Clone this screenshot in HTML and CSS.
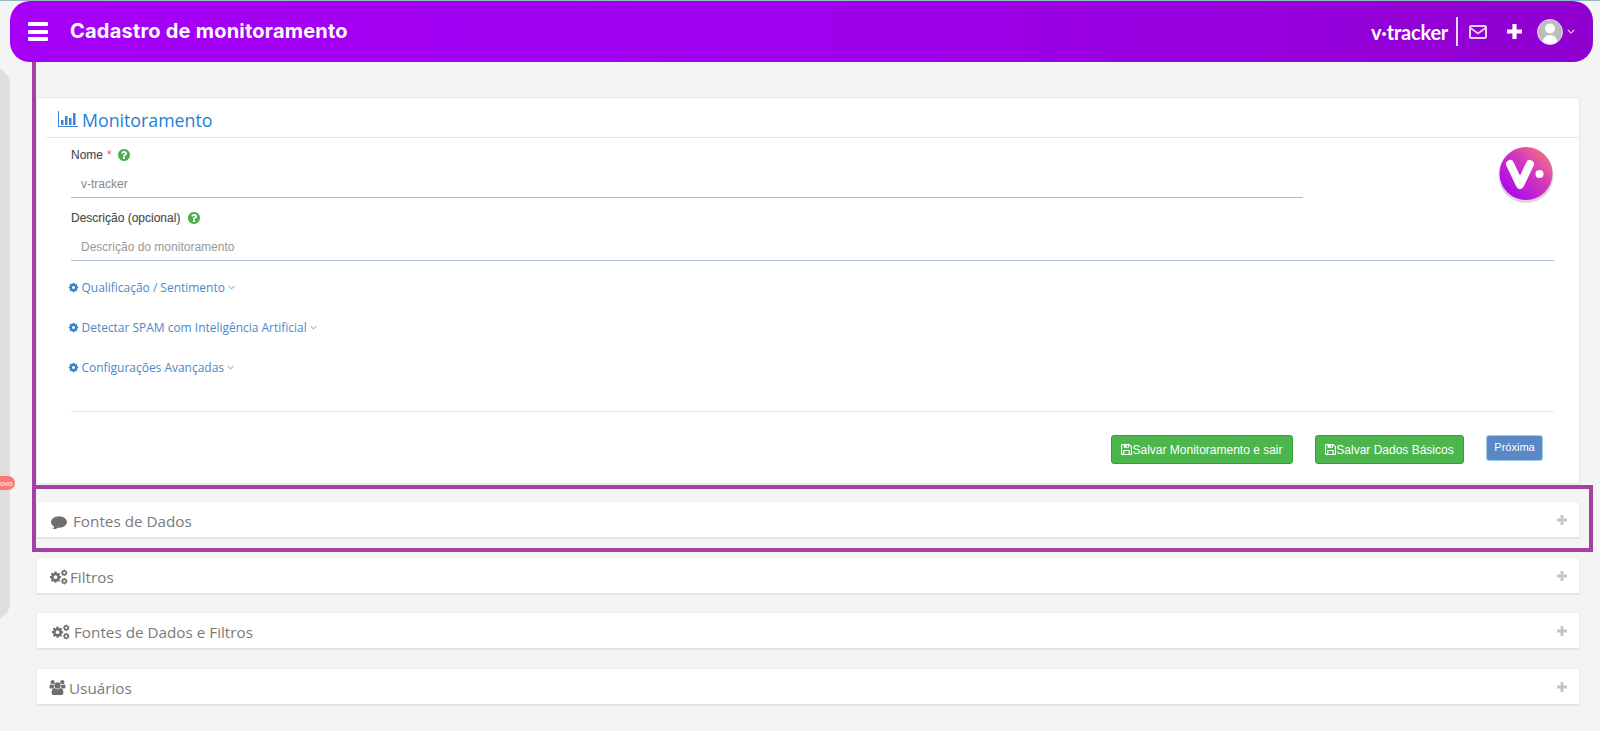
FILE: index.html
```html
<!DOCTYPE html>
<html lang="pt-BR">
<head>
<meta charset="utf-8">
<title>Cadastro de monitoramento</title>
<link rel="stylesheet" href="styles.css">
</head>
<body>
<svg class="defs" width="0" height="0" aria-hidden="true">
  <symbol id="cog" viewBox="0 0 1792 1792"><path d="M1152 896q0-106-75-181t-181-75-181 75-75 181 75 181 181 75 181-75 75-181zm512-109v222q0 12-8 23t-20 13l-185 28q-19 54-39 91 35 50 107 138 10 12 10 25t-9 23q-27 37-99 108t-94 71q-12 0-26-9l-138-108q-44 23-91 38-16 136-29 186-7 28-36 28h-222q-14 0-24.500-8.500t-11.500-21.500l-28-184q-49-16-90-37l-141 107q-10 9-25 9-14 0-25-11-126-114-165-168-7-10-7-23 0-12 8-23 15-21 51-66.500t54-70.500q-27-50-41-99l-183-27q-13-2-21-12.500t-8-23.500v-222q0-12 8-23t19-13l186-28q14-46 39-92-40-57-107-138-10-12-10-24 0-10 9-23 26-36 98.500-107.500t94.500-71.500q13 0 26 10l138 107q44-23 91-38 16-136 29-186 7-28 36-28h222q14 0 24.500 8.500t11.500 21.500l28 184q49 16 90 37l142-107q9-9 24-9 13 0 25 10 129 119 165 170 7 8 7 22 0 12-8 23-15 21-51 66.500t-54 70.500q26 50 41 98l183 28q13 2 21 12.500t8 23.500z"/></symbol>
  <symbol id="help" viewBox="128 128 1536 1536"><path d="M1024 1376v-192q0-14-9-23t-23-9h-192q-14 0-23 9t-9 23v192q0 14 9 23t23 9h192q14 0 23-9t9-23zm256-672q0-88-55.500-163t-138.500-116-170-41q-243 0-371 213-15 24 8 42l132 100q7 6 19 6 16 0 25-12 53-68 86-92 34-24 86-24 48 0 85.500 26t37.500 59q0 38-20 61t-68 45q-63 28-115.500 86.500t-52.500 125.500v36q0 14 9 23t23 9h192q14 0 23-9t9-23q0-19 21.500-49.500t54.500-49.500q32-18 49-28.500t46-35 44.500-48 28-60.500 12.500-81zm384 192q0 209-103 385.500t-279.500 279.500-385.500 103-385.500-103-279.500-279.500-103-385.500 103-385.500 279.500-279.500 385.500-103 385.500 103 279.500 279.500 103 385.500z"/></symbol>
  <symbol id="cogs" viewBox="0 0 24 20"><use href="#cog" x="0" y="2" width="16.500" height="16.500"/><use href="#cog" x="14.500" y="0" width="9.500" height="9.500"/><use href="#cog" x="14.500" y="10.500" width="9.500" height="9.500"/></symbol>
  <symbol id="chev" viewBox="0 0 10 6"><path d="M1 1l4 4 4-4" fill="none" stroke="currentColor" stroke-width="1.300"/></symbol>
  <symbol id="plus" viewBox="0 0 10 10"><path d="M3.600 0h2.800v3.600H10v2.800H6.400V10H3.600V6.400H0V3.600h3.600z"/></symbol>
  <symbol id="floppy" viewBox="0 0 12 12"><path fill-rule="evenodd" d="M0 1a1 1 0 0 1 1-1h8.200L12 2.800V11a1 1 0 0 1-1 1H1a1 1 0 0 1-1-1zM1.200 1.200v9.600h1.300V6.500h7v4.300h1.300V3.300L8.800 1.200v3H2.800v-3zM3.700 7.700v3.100h4.600V7.700zM6.200 1.400v1.800h1.300V1.400z"/></symbol>
</svg>

<aside class="side-rail"><span class="rail-badge">ovo</span></aside>

<div class="page">
  <header class="topbar">
    <div class="topbar-left">
      <span class="burger"><i></i><i></i><i></i></span>
      <h1 class="page-title">Cadastro de monitoramento</h1>
    </div>
    <div class="topbar-right">
      <span class="brand">v·tracker</span>
      <span class="brand-sep"></span>
      <svg class="mail" viewBox="0 0 18 14"><rect x="1" y="1" width="16" height="12" rx="1.500" fill="none" stroke="currentColor" stroke-width="2"/><path d="M1.500 3l7.500 5.500L16.500 3" fill="none" stroke="currentColor" stroke-width="1.700"/></svg>
      <svg class="top-plus"><use href="#plus"/></svg>
      <span class="avatar"><svg viewBox="0 0 24 24"><circle cx="12" cy="8.500" r="5"/><path d="M4.500 24c0-6 3-9 7.500-9s7.500 3 7.500 9z"/></svg></span>
      <svg class="top-chev"><use href="#chev"/></svg>
    </div>
  </header>

  <main class="content">
    <section class="card">
      <div class="card-head">
        <h2 class="card-title">
          <svg class="chart" viewBox="0 0 20 16"><path d="M0 0h1v15h19v1H0z"/><rect x="3" y="9" width="2.500" height="5"/><rect x="7" y="5" width="2.500" height="9"/><rect x="11" y="7" width="2.500" height="7"/><rect x="15" y="2" width="2.500" height="12"/></svg>
          Monitoramento
        </h2>
      </div>
      <form class="form">
        <div class="name-row">
          <div class="field name-field">
            <label class="label">Nome <span class="req">*</span> <svg class="help"><use href="#help"/></svg></label>
            <div class="input val">v-tracker</div>
          </div>
          <svg class="logo" viewBox="0 0 56 58">
            <defs><linearGradient id="lg" x1="0" y1="1" x2="1" y2="0"><stop offset=".2" stop-color="#b30de6"/><stop offset=".6" stop-color="#d63bb8"/><stop offset="1" stop-color="#ff8573"/></linearGradient></defs>
            <circle cx="28" cy="29.500" r="27.500" fill="#d8d8d8"/>
            <circle cx="28" cy="27.500" r="26.500" fill="url(#lg)"/>
            <path d="M12 18l10 21 10-21" fill="none" stroke="#fff" stroke-width="8" stroke-linecap="round" stroke-linejoin="round"/>
            <circle cx="41.500" cy="28" r="4" fill="#fff"/>
          </svg>
        </div>
        <div class="field desc-field">
          <label class="label">Descrição (opcional) <svg class="help"><use href="#help"/></svg></label>
          <div class="input ph">Descrição do monitoramento</div>
        </div>
        <ul class="toggles">
          <li class="toggle"><svg class="tcog"><use href="#cog"/></svg>Qualificação / Sentimento<svg class="tchev"><use href="#chev"/></svg></li>
          <li class="toggle"><svg class="tcog"><use href="#cog"/></svg>Detectar SPAM com Inteligência Artificial<svg class="tchev"><use href="#chev"/></svg></li>
          <li class="toggle"><svg class="tcog"><use href="#cog"/></svg>Configurações Avançadas<svg class="tchev"><use href="#chev"/></svg></li>
        </ul>
        <div class="actions">
          <button type="button" class="btn green"><svg class="fl"><use href="#floppy"/></svg>Salvar Monitoramento e sair</button>
          <button type="button" class="btn green second"><svg class="fl"><use href="#floppy"/></svg>Salvar Dados Básicos</button>
          <button type="button" class="btn blue">Próxima</button>
        </div>
      </form>
    </section>

    <section class="panel">
      <span class="panel-title"><svg class="pi comment" viewBox="0 0 1792 1536"><path d="M1792 768q0 174-120 321.500t-326 233-450 85.500q-70 0-145-8-198 175-460 242-49 14-114 22-17 2-30.500-9t-17.500-29v-1q-3-4-.5-12t2-10 4.500-9.500l6-9 7-8.500 8-9q7-8 31-34.500t34.500-38 31-39.500 32.500-51 27-59 26-76q-157-89-247.500-220t-90.500-281q0-130 71-248.500t191-204.500 286-136.500 348-50.500q244 0 450 85.500t326 233 120 321.500z"/></svg>Fontes de Dados</span>
      <svg class="panel-plus"><use href="#plus"/></svg>
    </section>
    <section class="panel">
      <span class="panel-title"><svg class="pi cogs"><use href="#cogs"/></svg>Filtros</span>
      <svg class="panel-plus"><use href="#plus"/></svg>
    </section>
    <section class="panel">
      <span class="panel-title t-wide"><svg class="pi cogs"><use href="#cogs"/></svg>Fontes de Dados e Filtros</span>
      <svg class="panel-plus"><use href="#plus"/></svg>
    </section>
    <section class="panel">
      <span class="panel-title"><svg class="pi users" viewBox="0 0 1920 1792"><path d="M593 896q-162 5-265 128h-134q-82 0-138-40.500t-56-118.500q0-353 124-353 6 0 43.500 21t97.500 42.500 119 21.500q67 0 133-23-5 37-5 66 0 139 81 256zm1071 637q0 120-73 189.500t-194 69.500h-874q-121 0-194-69.500t-73-189.500q0-53 3.500-103.500t14-109 26.500-108.500 43-97.500 62-81 85.500-53.500 111.500-20q10 0 43 21.500t73 48 107 48 135 21.500 135-21.500 107-48 73-48 43-21.500q61 0 111.500 20t85.500 53.500 62 81 43 97.500 26.500 108.500 14 109 3.500 103.500zm-1024-1277q0 106-75 181t-181 75-181-75-75-181 75-181 181-75 181 75 75 181zm704 384q0 159-112.500 271.500t-271.500 112.500-271.500-112.500-112.500-271.500 112.500-271.500 271.500-112.500 271.500 112.500 112.500 271.500zm576 225q0 78-56 118.500t-138 40.500h-134q-103-123-265-128 81-117 81-256 0-29-5-66 66 23 133 23 59 0 119-21.500t97.500-42.500 43.500-21q124 0 124 353zm-128-609q0 106-75 181t-181 75-181-75-75-181 75-181 181-75 181 75 75 181z"/></svg>Usuários</span>
      <svg class="panel-plus"><use href="#plus"/></svg>
    </section>
  </main>
</div>

<div class="mark-line"></div>
<div class="mark-box"></div>
</body>
</html>
```

FILE: styles.css
```css
* { box-sizing: border-box; }
html, body { height: 100%; }
body {
  margin: 0;
  background: #f4f4f4;
  font-family: "Open Sans", sans-serif;
  overflow: hidden;
}
.defs { position: absolute; }
svg { display: block; flex: none; }

.page { border-top: 1px solid #8fb8c0; }

/* top bar */
.topbar {
  height: 61px;
  margin: 0 7px 0 10px;
  padding: 0 18px 0 18px;
  display: flex;
  align-items: center;
  justify-content: space-between;
  color: #fff;
  border-radius: 20px;
  background: linear-gradient(90deg, #a600f7 0%, #a000ee 50%, #8f00cf 100%);
}
.topbar-left { display: flex; align-items: center; }
.burger { width: 20px; display: flex; flex-direction: column; gap: 3.500px; margin-right: 22px; }
.burger i { display: block; height: 4px; background: #fff; border-radius: 1px; }
.page-title { margin: 0 0 1px; font: 700 20px "Inter", sans-serif; line-height: 24px; letter-spacing: .22px; }
.topbar-right { display: flex; align-items: center; }
.brand { font: 700 20px "Lato", sans-serif; letter-spacing: -.2px; width: 77px; white-space: nowrap; }
.brand-sep { width: 2px; height: 29px; background: #f0d8fa; margin: 0 11px 0 8px; }
.mail { width: 18px; height: 14px; color: #ecd0fa; }
.top-plus { width: 15px; height: 15px; fill: #fff; margin-left: 20px; }
.avatar {
  width: 26px; height: 26px; margin-left: 15px; border-radius: 50%;
  background: #bdbdbd; overflow: hidden; border: 1.500px solid #e4c8ee;
}
.top-chev { width: 8px; height: 5px; color: #f0e0f8; margin-left: 4px; }
.avatar svg { width: 100%; height: 100%; fill: #fff; }

/* content */
.content { padding: 35px 20px 0 36px; }
.card {
  height: 387px;
  background: #fff;
  border: 1px solid #e6e6e6;
  border-radius: 3px;
}
.card-head { height: 40px; margin-left: 9px; border-bottom: 1px solid #e8e8e8; padding: 10px 0 0 12px; }
.card-title {
  margin: 0; display: flex; align-items: center; gap: 4px;
  font: 400 17.750px/24px "Open Sans", sans-serif; color: #1f80d4;
}
.chart { width: 20px; height: 16px; fill: #3d85d0; margin-top: -3px; }

.form { padding: 7px 25px 0 34px; }
.name-row { display: flex; align-items: flex-start; }
.name-field { width: 1232px; }
.logo { width: 56px; height: 58px; margin: 1px 0 -8px auto; }
.label {
  display: flex; align-items: center; height: 20px;
  font: 400 12px "Liberation Sans", sans-serif; color: #4a4a4a;
  -webkit-text-stroke: .12px #4a4a4a;
}
.req { color: #f06060; margin: 0 6px 0 4px; -webkit-text-stroke: 0; }
.help { width: 12px; height: 12px; fill: #4cae4c; }
.label > .help { margin-left: 8px; }
.req + .help { margin-left: 0; }
.input {
  height: 33px; padding: 11px 10px 0;
  font: 400 12px/16px "Liberation Sans", sans-serif;
  border-bottom: 1px solid #a9bcdc;
}
.val { color: #888; }
.ph { color: #999; }
.desc-field { margin-top: 10px; }

.toggles { list-style: none; margin: 0; padding: 6px 0 0; }
.toggle {
  display: flex; align-items: center; height: 40px; margin-left: -3px;
  font: 400 12px "Open Sans", sans-serif; color: #4d88c8;
  letter-spacing: -.02px;
}
.tcog { width: 11px; height: 11px; fill: #3a7fc4; margin-right: 2.500px; }
.tchev { width: 7px; height: 5px; color: #4d88c8; margin-left: 3px; }

.actions {
  margin-top: 24px;
  border-top: 1px solid #e8e8e8;
  padding: 23px 11px 0 0;
  display: flex; justify-content: flex-end; align-items: flex-start;
}
.btn {
  border-radius: 3px; color: #fff; padding: 0;
  font: 400 12px "Liberation Sans", sans-serif;
  display: flex; align-items: center; justify-content: center;
}
.green { height: 29px; background: #4cb54c; border: 1px solid #2fa32f; width: 182px; }
.green.second { width: 149px; margin-left: 22px; }
.blue { height: 26px; width: 57px; margin-left: 22px; background: #5a87c5; border: 1px solid #9fd0ea; font-size: 11px; padding-bottom: 3px; }
.fl { width: 11px; height: 11px; fill: #fff; }

/* accordion panels */
.panel {
  height: 38px; margin-top: 17.400px; padding: 3px 12px 0 12px;
  display: flex; align-items: center; justify-content: space-between;
  background: #fff;
  border: 1px solid #ececec;
  border-bottom: 2px solid #e6e6e6;
  border-radius: 3px;
}
.panel-title { display: flex; align-items: center; font-size: 15.250px; line-height: 20px; color: #7a7a7a; }
.pi { fill: #6f6f6f; }
.comment { width: 16px; height: 14px; margin: 1px 6px 0 2px; }
.cogs { width: 19px; height: 16px; margin: 0 2px 0 0; }
.t-wide .cogs { margin: 0 4px 0 2px; }
.users { width: 17px; height: 15px; margin-right: 3px; }
.panel-plus { width: 10px; height: 10px; fill: #c4c4c4; margin-bottom: 2px; }

/* page-level overlays */
.side-rail {
  position: absolute; left: -20px; top: 68px; width: 30px; height: 551px;
  background: #dedede; border-radius: 0 16px 16px 0;
}
.rail-badge {
  position: absolute; left: 20px; top: 408px; height: 14px; width: 15px;
  border-radius: 0 7px 7px 0; background: #f97a70; color: #fff;
  font: 400 7.500px/14px "Open Sans", sans-serif; text-align: left;
}
.mark-line { position: absolute; left: 32px; top: 62px; width: 4px; height: 424px; background: #a442a4; }
.mark-box { position: absolute; left: 32px; top: 485px; width: 1561px; height: 67px; border: 4px solid #a442a4; }
```
